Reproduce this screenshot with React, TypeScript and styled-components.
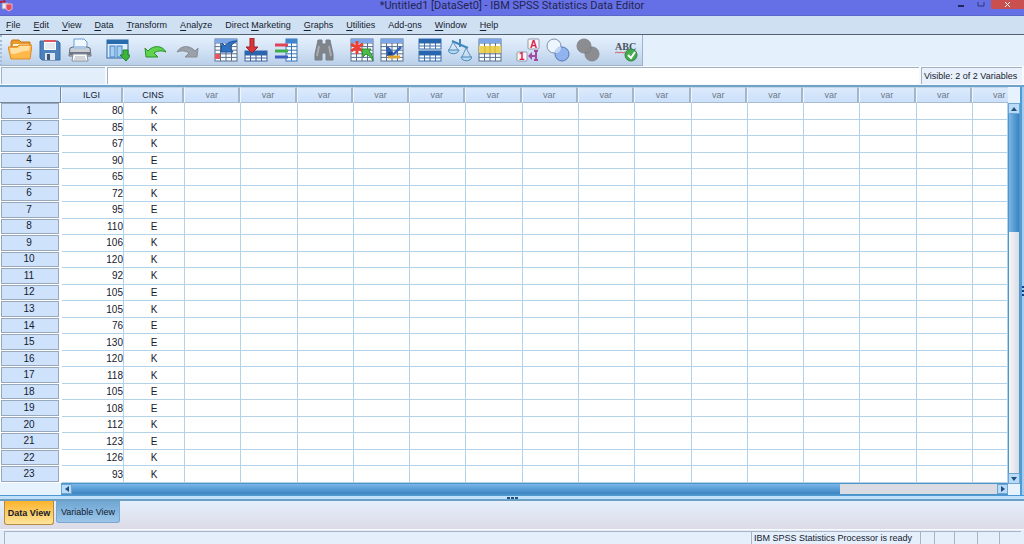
import React from "react";
import styled, { createGlobalStyle } from "styled-components";

const GlobalStyle = createGlobalStyle`
  * { box-sizing: border-box; }
  body {
    margin: 0;
    background: #e4effb;
    color: #15202e;
    font-family: "Liberation Sans", Arial, sans-serif;
    font-size: 9px;
    line-height: 12px;
  }
  button { font: inherit; color: inherit; margin: 0; padding: 0; border: 0; background: none; }
`;

const Window = styled.div`
  display: flex;
  flex-direction: column;
  height: 100vh;
  min-height: 540px;
  overflow: hidden;
`;

/* Title bar */

const TitleBar = styled.header`
  flex: none;
  display: grid;
  grid-template-columns: 1fr auto 1fr;
  height: 16px;
  background: #6670e6;
  border-bottom: 1px solid #5a66c8;
`;

const AppMark = styled.svg`
  width: 14px;
  height: 12px;
`;

const Title = styled.h1`
  margin: 0;
  font-family: Roboto, "Open Sans", sans-serif;
  font-size: 11px;
  font-weight: 400;
  line-height: 12px;
  color: #23254f;
  white-space: nowrap;
`;

const WindowControls = styled.div`
  display: flex;
  justify-content: flex-end;
`;

const ControlButton = styled.button<{ $close?: boolean }>`
  width: ${(p) => (p.$close ? 33 : 20)}px;
  height: 9px;
  background: ${(p) => (p.$close ? "#c9504f" : "transparent")};
  svg { display: block; margin: 0 auto; }
`;

/* Menu bar */

const MenuBar = styled.nav`
  flex: none;
  display: flex;
  align-items: center;
  gap: 13px;
  height: 19px;
  padding-left: 6px;
  background: #cfe0f2;
  border-bottom: 1px solid #53616e;
`;

const MenuItem = styled.button`
  white-space: nowrap;
  u { text-underline-offset: 2px; }
`;

/* Tool bar */

const ToolStrip = styled.div`
  flex: none;
  display: flex;
  height: 31px;
  background: #e4f0fc;
`;

const ToolBar = styled.div`
  display: flex;
  align-items: center;
  gap: 8px;
  padding: 0 1px 0 3px;
  border-left: 2px dotted #a5bdd9;
  border-right: 1px solid #9db3cb;
  border-bottom: 1px solid #9eb2c8;
  background: linear-gradient(#e6f1fd, #d3e3f5 50%, #b9cfe9);
`;

const ToolGroup = styled.div<{ $gap?: number }>`
  display: flex;
  gap: ${(p) => p.$gap ?? 0}px;
`;

const ToolButton = styled.button`
  display: flex;
  justify-content: center;
  width: 30px;
  svg { display: block; width: 24px; height: 24px; }
`;

/* Cell editor */

const EditorBar = styled.div`
  flex: none;
  display: flex;
  gap: 2px;
  height: 19px;
  padding: 1px 2px 1px 1px;
  background: #f6fafe;
`;

const editorBorder = `
  border: solid #a3b1c0;
  border-width: 1px 0 0 1px;
`;

const CellName = styled.output`
  width: 104px;
  ${editorBorder}
  background: #e2eefa;
`;

const CellInput = styled.input`
  flex: 1;
  min-width: 0;
  padding: 0 4px;
  ${editorBorder}
  background: #fff;
  font: inherit;
  outline: 0;
`;

const VisibleCount = styled.span`
  width: 101px;
  ${editorBorder}
  padding: 2px 0 0 2px;
  background: #e9f2fc;
  white-space: nowrap;
`;

/* Data grid */

const GridFrame = styled.main`
  flex: 1;
  min-height: 0;
  display: flex;
  border-top: 2px solid #6ea2c8;
  background: #e6f3ff;
`;

const GridArea = styled.div`
  flex: 1;
  min-width: 0;
  display: flex;
  flex-direction: column;
`;

const DataTable = styled.table`
  flex: 1;
  min-height: 0;
  display: flex;
  flex-direction: column;
  background: #fff;
  thead { display: block; }
  tbody {
    flex: 1;
    min-height: 0;
    display: grid;
    grid-template-rows: repeat(23, minmax(0, 1fr));
  }
`;

const Row = styled.tr<{ $head?: boolean }>`
  display: grid;
  grid-template-columns:
    ${(p) => (p.$head ? 61 : 62)}px 62px 61px
    repeat(14, minmax(0, 1fr))
    ${(p) => (p.$head ? 36 : 35)}px;
  min-height: 0;
`;

const HeaderCell = styled.th<{ $unused?: boolean }>`
  height: 16px;
  padding: 1px 0 0;
  overflow: hidden;
  border: 1px solid #a9bccf;
  border-top-color: #c3d4e6;
  border-right: 2px solid #a5b6c8;
  border-left-color: #eff6fd;
  background: linear-gradient(#dceafc, #cbe0fb);
  color: ${(p) => (p.$unused ? "#6d7988" : "#15202e")};
  font-weight: 400;
  line-height: 13px;
  text-align: center;
`;

const ClippedHeader = styled(HeaderCell)`
  padding-left: 20px;
  border-right: 0;
  text-align: left;
`;

const CornerCell = styled.td`
  padding: 0;
  border: solid #75879a;
  border-width: 0 1px 1px 0;
  background: #d3e6fc;
`;

const RowHeader = styled.th`
  display: flex;
  align-items: center;
  justify-content: center;
  min-height: 0;
  margin: 0 3px 1px 1px;
  padding: 0 2px 0 0;
  border: 1px solid #98a9bd;
  background: #cee2fb;
  font-size: 10px;
  font-weight: 400;
`;

const Cell = styled.td<{ $align?: string }>`
  display: flex;
  align-items: center;
  justify-content: ${(p) => p.$align ?? "flex-end"};
  min-height: 0;
  padding: 1px 0 0;
  border: solid #b3d3ea;
  border-width: 0 1px 1px 0;
  font-size: 10px;
  line-height: 12px;
`;

/* Scroll bars */

const SideScroll = styled.div`
  flex: none;
  display: flex;
  flex-direction: column;
  width: 12px;
  padding: 16px 0 11px;
`;

const BottomScroll = styled.div`
  flex: none;
  display: flex;
  height: 12px;
  margin-left: 61px;
  border: solid #4d93c6;
  border-width: 1px 0;
`;

const ScrollArrow = styled.button<{ $vertical?: boolean }>`
  flex: none;
  display: flex;
  align-items: center;
  justify-content: center;
  width: ${(p) => (p.$vertical ? 12 : 11)}px;
  height: ${(p) => (p.$vertical ? 11 : 10)}px;
  border: 1px solid #6da5d2;
  background: #b9dbf7;
`;

const Track = styled.div<{ $vertical?: boolean }>`
  flex: 1;
  display: flex;
  flex-direction: ${(p) => (p.$vertical ? "column" : "row")};
  border: solid #5794c1;
  border-width: ${(p) => (p.$vertical ? "0 1px" : "0")};
  background: ${(p) => (p.$vertical ? "linear-gradient(90deg, #f4f6fa, #dbdce4)" : "#dbdbe4")};
`;

const Thumb = styled.div<{ $size: number; $vertical?: boolean }>`
  flex: 0 0 ${(p) => p.$size}%;
  background: linear-gradient(${(p) => (p.$vertical ? "90deg" : "180deg")}, #78b7e9, #3b83c2);
`;

const RightEdge = styled.div`
  flex: none;
  display: flex;
  align-items: center;
  width: 4px;
  border-left: 2px solid #4e9bd6;
  background: #a4cdf0;
`;

const BottomEdge = styled.div`
  flex: none;
  display: flex;
  justify-content: center;
  height: 6px;
  border: solid;
  border-width: 1px 0 2px;
  border-color: #4d97d2 transparent #6d9fc5;
  background: #bfe1fb;
  svg { display: block; }
`;

/* View tabs */

const Tabs = styled.div`
  flex: none;
  display: flex;
  align-items: flex-start;
  gap: 2px;
  height: 28px;
  padding-left: 4px;
  background: linear-gradient(#e5effc, #dcdbe7);
`;

const Tab = styled.button<{ $active?: boolean }>`
  height: ${(p) => (p.$active ? 24 : 22)}px;
  width: ${(p) => (p.$active ? 50 : 64)}px;
  border: 1px solid ${(p) => (p.$active ? "#b08b45" : "#7ba7cd")};
  border-top: 0;
  border-radius: 0 0 3px 3px;
  background: ${(p) =>
    p.$active ? "linear-gradient(#fbb42d, #fee49b)" : "linear-gradient(#6fa6d3, #9bc6ea)"};
  font-weight: ${(p) => (p.$active ? 700 : 400)};
  white-space: nowrap;
`;

/* Status bar */

const StatusBar = styled.footer`
  flex: none;
  display: grid;
  grid-template-columns: 1fr 169px 14px 20px 23px 22px 22px;
  height: 15px;
  padding: 1px 3px 0 4px;
  border-top: 1px solid #f7fafe;
  background: #e4effb;
`;

const StatusCell = styled.div`
  padding: 0 0 0 2px;
  border: solid #a9b4c1;
  border-width: 1px 0 0 1px;
  white-space: nowrap;
`;

/* Icons */

type SheetProps = { x?: number; y?: number; w?: number; h?: number; head?: string; line?: string };

const Sheet = ({ x = 1, y = 1, w = 22, h = 22, head = "#3b78c9", line = "#58708e" }: SheetProps) => {
  const cols = Math.round(w / 5);
  const rows = Math.round((h - 4) / 4);
  return (
    <g>
      <rect x={x} y={y} width={w} height={h} fill="#fbfdff" stroke={line} />
      {Array.from({ length: cols - 1 }, (_, i) => (
        <path key={`c${i}`} d={`M${x + ((i + 1) * w) / cols} ${y + 4}v${h - 4}`} stroke={line} />
      ))}
      {Array.from({ length: rows }, (_, i) => (
        <path key={`r${i}`} d={`M${x} ${y + 4 + (i * (h - 4)) / rows}h${w}`} stroke={line} />
      ))}
      <rect x={x} y={y} width={w} height={4} fill={head} />
    </g>
  );
};

const Icon = ({ children }: { children: React.ReactNode }) => (
  <svg viewBox="0 0 24 24" fill="none" aria-hidden="true">{children}</svg>
);

const pale = "#7da7e8";

const icons: Record<string, React.ReactNode> = {
  open: (
    <>
      <path d="M3 20V4l1-2h7l2 2h9v15z" fill="#e89a2a" stroke="#c97718" />
      <path d="M5 8h16V6H5z" fill="#fff4d9" />
      <path d="M0 9h9l2-2h13l-2 14H3z" fill="#ffb94a" stroke="#dd8b26" />
      <path d="M2 10h8l2-2h10l-1 5C14 12 9 17 3 16z" fill="#ffe0a0" />
    </>
  ),
  save: (
    <>
      <path d="M2 3h18l2 2v17H4l-2-2z" fill="#4b82bd" stroke="#3a689d" />
      <path d="M6 2h12v10H6z" fill="#fff" />
      <path d="M6 2h12v2H6z" fill="#de5a62" />
      <path d="M7 6h10M7 8h10M7 10h10" stroke="#c8d4e2" />
      <path d="M7 15h10v7H7z" fill="#dce5ed" />
      <path d="M9 16h3v6H9z" fill="#3d5874" />
    </>
  ),
  print: (
    <>
      <path d="M6 11V1h10l3 3v7z" fill="#eff7ff" stroke="#6c9dd1" />
      <path d="M2 10l3-1h14l3 1 1 8H1z" fill="#c9cdd4" stroke="#666e79" />
      <path d="M2 14h20v3H2z" fill="#6e7681" />
      <path d="M6 8h12v3H6z" fill="#aac9e9" />
      <path d="M5 16h14l1 7H4z" fill="#fafbfd" stroke="#858e9a" />
      <path d="M7 19h10M6 21h12" stroke="#a7adb6" />
    </>
  ),
  dialogs: (
    <>
      <rect x="1" y="2" width="21" height="18" fill="#e1effd" stroke="#2f659f" />
      <path d="M1 2h21v4H1z" fill="#286cad" />
      <rect x="4" y="8" width="5" height="11" fill="#a7cef3" stroke="#3f83c4" />
      <rect x="11" y="8" width="5" height="11" fill="#a7cef3" stroke="#3f83c4" />
      <path d="M17 12h5v5h3l-5 6-6-6h3z" fill="#3bb53b" stroke="#21852a" />
    </>
  ),
  undo: <path d="M1 10l3 3c5-6 14-6 18 1-5-2-9-1-12 1l4 4H2z" fill="#5fd24e" stroke="#2b9130" />,
  redo: <path d="M22 10l-3 3C14 7 5 7 1 14c5-2 9-1 12 1l-4 4h12z" fill="#9ba1a9" stroke="#878e97" />,
  gotoCase: (
    <>
      <Sheet head={pale} />
      <path d="M1 16h5v5H1z" fill="#e8565c" />
      <path d="M8 5l3 3c3-4 7-5 12-5-4 2-6 4-7 7l3 4H7z" fill="#2f72c3" stroke="#1b4f97" />
    </>
  ),
  gotoVariable: (
    <>
      <Sheet y={13} h={10} head="#2867af" line="#3e6599" />
      <path d="M6 0h4v9h4l-6 6-6-6h4z" fill="#d9343b" stroke="#9d2027" />
    </>
  ),
  variables: (
    <>
      <Sheet x={12} w={11} head="#3f86cf" line="#3b76b8" />
      <path d="M1 7h13" stroke="#e04357" strokeWidth="3" />
      <path d="M1 13h13" stroke="#3eae4c" strokeWidth="3" />
      <path d="M1 19h13" stroke="#3d5ec1" strokeWidth="3" />
    </>
  ),
  find: (
    <>
      <path d="M6 2h4v4h4V2h4l1 5 2 9v6h-7v-7h-4v7H3v-6L5 7z" fill="#80858c" stroke="#777d84" />
      <path d="M7 8L5 18M17 8l2 10" stroke="#a8acb1" strokeWidth="2" />
    </>
  ),
  insertCase: (
    <>
      <Sheet head={pale} />
      <path d="M7 3v13M1 6l12 7M13 6L1 13" stroke="#ec4036" strokeWidth="3" />
      <path d="M12 11h9l-2 2c3 3 4 6 4 10-2-4-4-6-7-7l-3 3z" fill="#49bd45" stroke="#2c9031" />
    </>
  ),
  insertVariable: (
    <>
      <Sheet head={pale} />
      <path d="M6 8c4 1 6 4 7 7l7-7 2 2-9 8H7z" fill="#2c62b9" />
      <path d="M8 14h5l-2 4H8z" fill="#17468f" />
      <path d="M8 19h12" stroke="#e0a431" strokeWidth="3" />
    </>
  ),
  split: (
    <>
      <Sheet y={1} h={10} head="#2867af" line="#3f70a9" />
      <Sheet y={13} h={10} head="#2867af" line="#3f70a9" />
    </>
  ),
  weight: (
    <>
      <path d="M4 3l16 7M12 1v8" stroke="#4388bb" strokeWidth="2" />
      <path d="M5 4L1 12M5 4l5 8M18 10l-4 9M18 10l5 9" stroke="#5d93bd" />
      <path d="M0 12h11c-1 5-10 5-11 0zM13 19h11c-1 5-10 5-11 0z" fill="#b5d8f0" stroke="#4789b9" />
    </>
  ),
  select: (
    <>
      <Sheet head={pale} />
      <path d="M1 8h22v7H1z" fill="#ecd255" />
      <path d="M7 8v7M12 8v7M17 8v7" stroke="#d0b23d" />
    </>
  ),
  labels: (
    <>
      <rect x="12" y="1" width="11" height="10" rx="1" fill="#fff5f7" stroke="#8d9aad" />
      <text x="14" y="10" fill="#d5224c" fontFamily="Liberation Sans, sans-serif" fontWeight="700" fontSize="10">A</text>
      <rect x="1" y="14" width="10" height="9" rx="1" fill="#fff5f7" stroke="#8d9aad" />
      <text x="3" y="22" fill="#d5224c" fontFamily="Liberation Sans, sans-serif" fontWeight="700" fontSize="10">1</text>
      <path d="M20 13v9M18 13h4M18 22h4M20 18h-4" stroke="#a24ba1" strokeWidth="2" />
      <path d="M12 18l4-4v8z" fill="#a24ba1" />
    </>
  ),
  sets: (
    <>
      <circle cx="8" cy="8" r="7" fill="#edf5fe" stroke="#7e91a8" />
      <circle cx="16" cy="16" r="7" fill="#86acec" fillOpacity=".85" stroke="#5379b4" />
      <path d="M15 9c0 4-2 6-6 6 0-4 2-6 6-6z" fill="#c2d8f6" />
    </>
  ),
  allVariables: (
    <>
      <circle cx="8" cy="8" r="7" fill="#8b8d90" stroke="#83868a" />
      <circle cx="16" cy="16" r="7" fill="#8b8d90" stroke="#83868a" />
      <path d="M15 9c0 4-2 6-6 6" stroke="#777a7e" />
    </>
  ),
  spelling: (
    <>
      <text x="1" y="12" fill="#4b535d" fontFamily="Liberation Serif, serif" fontWeight="700" fontSize="10">ABC</text>
      <path d="M1 15l2-1 2 1 2-1 2 1 2-1" stroke="#d35a60" />
      <circle cx="17" cy="17" r="6" fill="#48aa4e" stroke="#2e843b" />
      <path d="M14 17l3 3 4-6" stroke="#fff" strokeWidth="2" />
    </>
  ),
};

const toolGroups: { gap?: number; tools: [string, string][] }[] = [
  { tools: [["open", "Open data document"], ["save", "Save this document"], ["print", "Print"]] },
  { tools: [["dialogs", "Recall recently used dialogs"]] },
  { gap: 2, tools: [["undo", "Undo"], ["redo", "Redo"]] },
  { tools: [["gotoCase", "Go to case"], ["gotoVariable", "Go to variable"], ["variables", "Variables"]] },
  { tools: [["find", "Find"]] },
  { tools: [["insertCase", "Insert cases"], ["insertVariable", "Insert variable"]] },
  { tools: [["split", "Split file"], ["weight", "Weight cases"], ["select", "Select cases"]] },
  { tools: [["labels", "Value labels"], ["sets", "Use variable sets"], ["allVariables", "Show all variables"]] },
  { tools: [["spelling", "Spell check"]] },
];

/* Label text, split round the underlined access key */
const menus: [string, string, string][] = [
  ["", "F", "ile"], ["", "E", "dit"], ["", "V", "iew"], ["", "D", "ata"],
  ["", "T", "ransform"], ["", "A", "nalyze"], ["Direct ", "M", "arketing"],
  ["", "G", "raphs"], ["", "U", "tilities"], ["Add-", "o", "ns"],
  ["", "W", "indow"], ["", "H", "elp"],
];

const cases: [number, string][] = [
  [80, "K"], [85, "K"], [67, "K"], [90, "E"], [65, "E"], [72, "K"],
  [95, "E"], [110, "E"], [106, "K"], [120, "K"], [92, "K"], [105, "E"],
  [105, "K"], [76, "E"], [130, "E"], [120, "K"], [118, "K"], [105, "E"],
  [108, "E"], [112, "K"], [123, "E"], [126, "K"], [93, "K"],
];

const unusedColumns = Array.from({ length: 14 }, (_, i) => i);

const Arrow = ({ d }: { d: string }) => (
  <svg width="6" height="6" viewBox="0 0 6 6" aria-hidden="true"><path d={d} fill="#234f7c" /></svg>
);

export default function App() {
  return (
    <Window>
      <GlobalStyle />
      <TitleBar>
        <AppMark viewBox="0 0 14 12" aria-hidden="true">
          <path d="M0 2h6M4 0v5" stroke="#b32542" strokeWidth="2" />
          <path d="M2 3h6v6H2z" fill="#e9edf8" stroke="#8795ba" />
          <path d="M6 4h6v5l-3 2-3-2z" fill="#e24b5d" stroke="#f1b6c0" />
        </AppMark>
        <Title>*Untitled1 [DataSet0] - IBM SPSS Statistics Data Editor</Title>
        <WindowControls>
          <ControlButton aria-label="Minimize">
            <svg width="8" height="6"><path d="M1 4h6" stroke="#202657" strokeWidth="2" /></svg>
          </ControlButton>
          <ControlButton aria-label="Maximize">
            <svg width="8" height="6"><path d="M1 0v4h6V0" fill="none" stroke="#303773" strokeWidth="1" /></svg>
          </ControlButton>
          <ControlButton $close aria-label="Close">
            <svg width="8" height="6"><path d="M1 0l5 5M6 0L1 5" stroke="#fff" strokeWidth="1" /></svg>
          </ControlButton>
        </WindowControls>
      </TitleBar>

      <MenuBar>
        {menus.map(([before, key, after]) => (
          <MenuItem key={before + key + after}>{before}<u>{key}</u>{after}</MenuItem>
        ))}
      </MenuBar>

      <ToolStrip>
        <ToolBar role="toolbar">
          {toolGroups.map((group) => (
            <ToolGroup key={group.tools[0][0]} $gap={group.gap}>
              {group.tools.map(([id, label]) => (
                <ToolButton key={id} aria-label={label}><Icon>{icons[id]}</Icon></ToolButton>
              ))}
            </ToolGroup>
          ))}
        </ToolBar>
      </ToolStrip>

      <EditorBar>
        <CellName aria-label="Active cell" />
        <CellInput aria-label="Cell value" />
        <VisibleCount>Visible: 2 of 2 Variables</VisibleCount>
      </EditorBar>

      <GridFrame>
        <GridArea>
          <DataTable>
            <thead>
              <Row $head>
                <CornerCell />
                <HeaderCell scope="col">ILGI</HeaderCell>
                <HeaderCell scope="col">CINS</HeaderCell>
                {unusedColumns.map((c) => <HeaderCell key={c} scope="col" $unused>var</HeaderCell>)}
                <ClippedHeader scope="col" $unused>var</ClippedHeader>
              </Row>
            </thead>
            <tbody>
              {cases.map(([score, group], i) => (
                <Row key={i}>
                  <RowHeader scope="row">{i + 1}</RowHeader>
                  <Cell>{score}</Cell>
                  <Cell $align="center">{group}</Cell>
                  {unusedColumns.map((c) => <Cell key={c} />)}
                  <Cell />
                </Row>
              ))}
            </tbody>
          </DataTable>
          <BottomScroll>
            <ScrollArrow aria-label="Scroll left"><Arrow d="M5 0v6L1 3z" /></ScrollArrow>
            <Track><Thumb $size={83} /></Track>
            <ScrollArrow aria-label="Scroll right"><Arrow d="M1 0v6l4-3z" /></ScrollArrow>
          </BottomScroll>
        </GridArea>
        <SideScroll>
          <ScrollArrow $vertical aria-label="Scroll up"><Arrow d="M0 5h6L3 1z" /></ScrollArrow>
          <Track $vertical><Thumb $vertical $size={33} /></Track>
          <ScrollArrow $vertical aria-label="Scroll down"><Arrow d="M0 1h6L3 5z" /></ScrollArrow>
        </SideScroll>
        <RightEdge>
          <svg width="2" height="10" aria-hidden="true"><path d="M0 1h2M0 5h2M0 9h2" stroke="#163f87" strokeWidth="2" /></svg>
        </RightEdge>
      </GridFrame>
      <BottomEdge>
        <svg width="11" height="3" aria-hidden="true"><path d="M0 2h3M4 2h3M8 2h3" stroke="#244f83" strokeWidth="2" /></svg>
      </BottomEdge>

      <Tabs role="tablist">
        <Tab role="tab" aria-selected $active>Data View</Tab>
        <Tab role="tab" aria-selected={false}>Variable View</Tab>
      </Tabs>

      <StatusBar>
        <StatusCell />
        <StatusCell>IBM SPSS Statistics Processor is ready</StatusCell>
        <StatusCell /><StatusCell /><StatusCell /><StatusCell /><StatusCell />
      </StatusBar>
    </Window>
  );
}
